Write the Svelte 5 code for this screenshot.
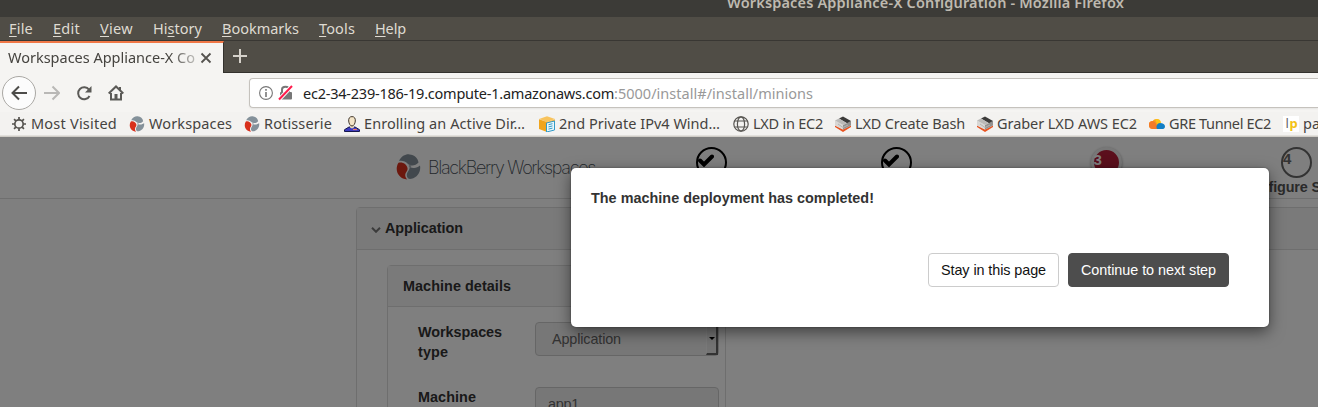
<script>
  const menus = [
    ['', 'F', 'ile', 24], ['', 'E', 'dit', 27], ['', 'V', 'iew', 33], ['Hi', 's', 'tory', 49],
    ['', 'B', 'ookmarks', 77], ['', 'T', 'ools', 36], ['', 'H', 'elp', 31]
  ];
  const bookmarks = [
    ['gear', 'Most Visited', 86], ['swirl', 'Workspaces', 83], ['swirl', 'Rotisserie', 68],
    ['person', 'Enrolling an Active Dir…', 161], ['box', '2nd Private IPv4 Wind…', 161],
    ['globe', 'LXD in EC2', 70], ['stack', 'LXD Create Bash', 110], ['stack', 'Graber LXD AWS EC2', 140],
    ['cloud', 'GRE Tunnel EC2', 102], ['lp', 'pa', 17]
  ];

  // Tracks the text so that it fills the given width.
  function fit(node, width) {
    const natural = node.getBoundingClientRect().width;
    node.style.letterSpacing = (width - natural) / node.textContent.length + 'px';
  }
</script>

{#snippet swirl()}
  <svg class="swirl" viewBox="0 0 24 26">
    <path fill="#84919a" d="M2.500 7C5 2 9 0 13 .4c5 .4 8.500 3.800 9 8.100-3 3.500-7.500 3.800-10.500 1.500C9 7.600 6 6.300 2.500 7Z" />
    <path fill="#84919a" d="M23.500 11.500c1.200 6-2.500 12-8.500 13.300-3 .7-4.500-1-4.700-3.300-.2-3.500 2.700-4.600 2.900-8.500 3.600 1.500 7.500 1.200 10.300-1.500Z" />
    <path fill="#d8301c" d="M2 8.800C6 7.600 10 10 11 14c.5 3-2 4-2.300 7 0 1.800.8 3.300 2 4.400C4.500 25 .3 20.500.2 15c0-2.300.6-4.500 1.800-6.200Z" />
    <circle cx="13.500" cy="12" r="1.300" fill="#aeb9bf" />
  </svg>
{/snippet}

{#snippet icon(kind)}
  {#if kind === 'swirl'}
    {@render swirl()}
  {:else}
    <svg viewBox="0 0 16 16">
      {#if kind === 'gear'}
        <g stroke="#55534f" fill="none" stroke-width="1.700">
          <circle cx="8" cy="8" r="4.200" />
          <path d="M8 1v2.500M8 12.500V15M1 8h2.500M12.500 8H15M3.050 3.050l1.800 1.800M11.150 11.150l1.800 1.800M12.950 3.050l-1.800 1.800M4.850 11.150l-1.800 1.800" />
        </g>
      {:else if kind === 'person'}
        <path d="M.5 15.500v-1.800L5 11h6l4.500 2.700v1.800Z" fill="#3b3bc0" stroke="#17174e" />
        <path d="M6 9h4v2.500l-2 1-2-1Z" fill="#e8d8b8" />
        <path d="M8 .6C5.500.6 4.500 2.500 4.700 5c.2 2.600 1.500 5 3.300 5s3.100-2.400 3.300-5C11.500 2.500 10.500.6 8 .6Z" fill="#f4e5c8" stroke="#42372d" />
        <path d="M9 13.500h4" stroke="#ed7864" stroke-width="1.200" />
      {:else if kind === 'box'}
        <path d="M0 3 8 .3 16 3 8 6Z" fill="#f8c35c" />
        <path d="M0 3.300 8 6v10l-8-3Z" fill="#f0a51e" />
        <path d="m8 6 8-2.700V13l-8 3Z" fill="#f5b544" />
        <path d="m7.500 7 8-2v9l-8 2Z" fill="#e8f7fc" stroke="#329ac8" />
        <path d="m9.500 8.700 4-1M9.500 10.900l4-1M9.500 13.100l4-1" stroke="#329ac8" />
      {:else if kind === 'globe'}
        <g fill="none" stroke="#575551" stroke-width="1.200">
          <circle cx="8" cy="8" r="7.200" /><ellipse cx="8" cy="8" rx="3.600" ry="7.200" />
          <path d="M1.500 5h13M1.500 11h13" />
        </g>
      {:else if kind === 'stack'}
        <path d="m0 9.500 8 4 8-4V11l-8 5-8-5Z" fill="#e95420" />
        <path d="M0 4.500 8 9v4.500l-8-4Z" fill="#d8d7d5" />
        <path d="m8 9 8-4v4.500l-8 4Z" fill="#92918f" />
        <path d="m4 2.500 4-2 8 4.500-4 2.200Z" fill="#3c3b3a" />
        <path d="m0 4.500 4-2 8 4.700L8 9Z" fill="#bbbab8" />
        <path d="m3 8 5 3.500 5-2.500" stroke="#b5b4b2" fill="none" />
      {:else if kind === 'cloud'}
        <path d="M4 13a4 4 0 0 1-.2-8c1-2.200 5-3.200 7.200-.3L9 13Z" fill="#fba11b" />
        <path d="M4 13a4 4 0 0 1-.2-8c2 .5 3.700 2 5.200 8Z" fill="#f47b29" />
        <path d="M6.200 3.400c2-1.200 5-.4 6 3L9 10Z" fill="#fdc217" />
        <path d="M8 13c-1.500-3 .5-6 3-6 3 0 5 1.500 5 3.400S14.500 13 13 13Z" fill="#117fc5" />
      {:else}
        <path d="M0 0h16v16H0Z" fill="#fff" />
        <text x="2.500" y="12" font-size="13" fill="#666">l</text>
        <text x="6.500" y="12" font-size="13" font-weight="700" fill="#f3c216">p</text>
      {/if}
    </svg>
  {/if}
{/snippet}

<div class="window">
  <div class="title"><span use:fit={397}>Workspaces Appliance-X Configuration - Mozilla Firefox</span></div>
  <nav class="menu">
    {#each menus as [before, key, after, w]}
      <span class="slot" style:width="{w}px"><span use:fit={w}>{before}<u>{key}</u>{after}</span></span>
    {/each}
  </nav>
  <div class="tabs">
    <div class="tab">
      <div class="label"><span use:fit={187}>Workspaces Appliance-X Co</span></div>
      <svg viewBox="0 0 12 12"><path d="m1.500 1.500 9 9m0-9-9 9" stroke="#55534f" stroke-width="1.800" /></svg>
    </div>
    <div class="rest"><svg viewBox="0 0 14 14"><path d="M7 0v14M0 7h14" stroke="#d5d1ca" stroke-width="2" /></svg></div>
  </div>
  <div class="nav">
    <span class="back"><svg viewBox="0 0 16 16"><path d="M16 8H1.500M8 1.500 1.500 8 8 14.500" fill="none" stroke="#4d4c49" stroke-width="2" /></svg></span>
    <svg class="fwd" viewBox="0 0 16 16"><path d="M0 8h14.500M8.500 1.500 15 8l-6.500 6.500" fill="none" stroke="#b9b8b6" stroke-width="2" /></svg>
    <svg class="reload" viewBox="0 0 16 16"><path d="M13 4.700A6 6 0 1 0 13.500 11" fill="none" stroke="#5b5a57" stroke-width="2" /><path d="M15.500 1v6.500H9Z" fill="#5b5a57" /></svg>
    <svg class="home" viewBox="0 0 16 16"><path d="M.7 8.500 8 1.500l7.300 7" fill="none" stroke="#5b5a57" stroke-width="2" /><path d="M3 8v6.500h10V8M12 2v3" fill="none" stroke="#5b5a57" stroke-width="2" /><path d="M6.500 9h3v5.500h-3Z" fill="#5b5a57" /></svg>
    <div class="url">
      <svg class="info" viewBox="0 0 14 14"><circle cx="7" cy="7" r="6.400" fill="none" stroke="#777" stroke-width="1.100" /><path d="M7 3v1.700M7 6v5" stroke="#777" stroke-width="1.600" /></svg>
      <svg class="lock" viewBox="0 0 15 16"><path d="M4 7V4.500C4 .8 11 .8 11 4.500V7" fill="none" stroke="#777" stroke-width="2" /><rect x="2" y="7" width="12" height="7.500" rx="1" fill="#777" /><path d="M1 14.500 14 1" stroke="#fff" stroke-width="4" /><path d="M1 14.500 14 1" stroke="#ff1b4b" stroke-width="2" /></svg>
      <span class="host" use:fit={311}>ec2-34-239-186-19.compute-1.amazonaws.com</span><span class="path" use:fit={199}>:5000/install#/install/minions</span>
    </div>
  </div>
  <div class="bookmarks">
    {#each bookmarks as [kind, text, w]}
      <span class="mark">{@render icon(kind)}<span class="text"><span use:fit={w}>{text}</span></span></span>
    {/each}
  </div>

  <main>
    <header>
      <div class="brand">{@render swirl()}<span use:fit={167}>BlackBerry Workspaces</span></div>
      <div class="steps">
        {#each [1, 2] as n (n)}
          <div class="step"><span class="dot done"><svg viewBox="0 0 16 13"><path d="m2 6.500 4 4 8-8" fill="none" stroke="#000" stroke-width="4" stroke-linecap="round" /></svg></span></div>
        {/each}
        <div class="step"><span class="dot now">3</span></div>
        <div class="step"><span class="dot next">4</span><b><span use:fit={80}>Configure S</span></b></div>
      </div>
    </header>
    <section class="panel">
      <h2><svg viewBox="0 0 10 6"><path d="m1 .8 4 4 4-4" fill="none" stroke="#777" stroke-width="2" /></svg><span use:fit={78}>Application</span></h2>
      <div class="inner">
        <h3><span use:fit={108}>Machine details</span></h3>
        <div class="row">
          <div class="name"><span use:fit={84}>Workspaces</span><br /><span use:fit={30}>type</span></div>
          <div class="field select"><span use:fit={69}>Application</span><i></i></div>
        </div>
        <div class="row">
          <div class="name"><span use:fit={58}>Machine</span></div>
          <div class="field"><span use:fit={31}>app1</span></div>
        </div>
      </div>
    </section>
    <div class="shade"></div>
    <div class="modal">
      <p><span use:fit={283}>The machine deployment has completed!</span></p>
      <div class="actions">
        <button><span use:fit={105}>Stay in this page</span></button>
        <button class="primary"><span use:fit={135}>Continue to next step</span></button>
      </div>
    </div>
  </main>
</div>

<style>
  .window { width: 1318px; height: 407px; overflow: hidden; display: flex; flex-direction: column; font: 14.5px/20px "Noto Sans", sans-serif; color: #45433f; white-space: nowrap; }
  .window * { box-sizing: border-box; }
  svg { display: block; flex: none; }
  .title { height: 17px; flex: none; background: #3c3b37; color: #bfbab0; padding-left: 727px; overflow: hidden; display: flex; font-weight: 600; line-height: 20px; }
  .title span { margin-top: -8px; height: 20px; }
  .menu { height: 23px; flex: none; background: #504d46; color: #dfdbd2; display: flex; gap: 20px; padding: 1px 0 0 9px; }
  .slot { flex: none; }
  u { text-decoration-thickness: 1px; text-underline-offset: 2px; }
  .tabs { height: 33px; flex: none; display: flex; background: #f5f4f2; border-top: 1px solid #393733; }
  .tab { width: 224px; border-top: 2px solid #f07746; border-right: 1px solid #33312d; display: flex; align-items: center; padding: 0 0 3px 8px; }
  .label { width: 188px; overflow: hidden; -webkit-mask-image: linear-gradient(90deg, #000 162px, transparent 198px); mask-image: linear-gradient(90deg, #000 162px, transparent 198px); }
  .tab svg { width: 12px; height: 12px; margin: 2px 0 0 4px; }
  .rest { flex: 1; background: #504d46; border-bottom: 1px solid #33312d; padding: 8px 0 0 9px; }
  .rest svg { width: 14px; height: 14px; }
  .nav { height: 39px; flex: none; background: #f5f4f2; display: flex; align-items: center; padding: 1px 0 0 2px; }
  .back { width: 34px; height: 34px; border: 1px solid #aaa8a4; border-radius: 50%; background: #fcfcfc; display: grid; place-items: center; }
  .nav svg { width: 16px; height: 16px; }
  .nav .fwd { margin-left: 8px; }
  .nav .reload { margin-left: 16px; }
  .nav .home { margin-left: 16px; }
  .url { flex: 1; height: 30px; margin-left: 125px; background: #fff; border: 1px solid #c5c2bd; border-right: 0; border-radius: 4px 0 0 4px; display: flex; align-items: center; padding-left: 9px; box-shadow: 0 1px 2px #0001; }
  .url .info { width: 14px; height: 14px; }
  .url .lock { width: 15px; height: 16px; margin: 0 10px 0 5px; }
  .host { color: #222; }
  .path { color: #999; }
  .bookmarks { height: 24px; flex: none; background: #f3f2f0; display: grid; grid-template-columns: 118px 115px 100px 195px 194px 102px 142px 172px 134px 40px; padding-left: 11px; border-bottom: 1px solid #e2e0dc; }
  .mark { display: flex; align-items: center; gap: 4px; }
  .mark svg { width: 16px; height: 16px; }
  .mark svg text { font-family: "Noto Sans", sans-serif; }
  .text { padding-bottom: 2px; }
  main { flex: 1; position: relative; background: #fff; border-top: 1px solid #cfccc6; font: 14.4px/20px "Liberation Sans", Arial, sans-serif; color: #333; overflow: hidden; }
  header { height: 62px; border-bottom: 1px solid #dedede; display: flex; }
  .brand { width: 619px; flex: none; padding: 17px 0 0 396px; display: flex; gap: 7px; font: 200 18px/27px Inter, sans-serif; color: #464e56; }
  .brand :global(.swirl) { width: 25px; height: 26px; }
  .steps { flex: none; display: grid; grid-template-columns: 185px 185px 234px 147px; padding-top: 10px; }
  .step { display: flex; flex-direction: column; align-items: center; font-weight: 700; }
  .step b { align-self: flex-start; padding-left: 18px; line-height: 18px; color: #555; }
  .dot { width: 31px; height: 31px; flex: none; border-radius: 50%; border: 2px solid #000; line-height: 20px; }
  .done svg { width: 16px; height: 13px; margin-top: 5px; }
  .now { background: #b71f38; border: 3px solid #eee; color: #fff; box-shadow: 0 1px 3px #0006; font-size: 15px; line-height: 19px; }
  .next { border-color: #666; color: #666; font-size: 15px; }
  .panel { margin: 8px 0 0 356px; width: 980px; height: 260px; border: 1px solid #ddd; border-radius: 4px; }
  h2, h3 { font-size: 14.4px; line-height: 20px; margin: 0; background: #f5f5f5; border-bottom: 1px solid #ddd; display: flex; align-items: center; }
  h2 { height: 42px; padding: 0 0 1px 14px; gap: 4px; }
  h2 svg { width: 10px; height: 6px; margin-top: 3px; }
  .inner { margin: 15px 0 0 30px; width: 339px; height: 260px; border: 1px solid #ddd; border-radius: 4px; }
  h3 { height: 41px; padding-left: 15px; }
  .row { display: flex; height: 65px; padding: 15px 0 0 30px; font-weight: 700; }
  .name { width: 117px; flex: none; }
  .field { width: 184px; height: 34px; flex: none; border: 1px solid #ccc; border-radius: 4px; background: #eee; color: #666; font-weight: 400; padding: 6px 0 0 12px; display: flex; }
  .select { padding: 0 0 0 16px; align-items: center; }
  i { margin-left: auto; width: 12px; height: 100%; border-right: 2px solid #666; border-bottom: 2px solid #666; border-left: 1px solid #f5f5f5; background: #e8e8e8; display: grid; place-items: center; }
  i::before { content: ""; border: 3.500px solid transparent; border-top-color: #000; border-bottom: 0; }
  .shade { position: absolute; inset: 0; background: #00000080; }
  .modal { position: absolute; left: 571px; top: 31px; width: 698px; height: 159px; background: #fff; border-radius: 5px; box-shadow: 0 5px 15px #00000080, 0 0 2px #0006; padding: 20px 40px 40px 20px; display: flex; flex-direction: column; justify-content: space-between; }
  p { margin: 0; font-weight: 700; }
  .actions { display: flex; justify-content: flex-end; gap: 9px; }
  button { height: 34px; width: 131px; padding: 0; font: 14.4px/20px "Liberation Sans", Arial, sans-serif; border: 1px solid #ccc; border-radius: 4px; background: #fff; color: #111; }
  .primary { width: 161px; background: #4d4d4d; border-color: #4d4d4d; color: #fff; }
</style>
